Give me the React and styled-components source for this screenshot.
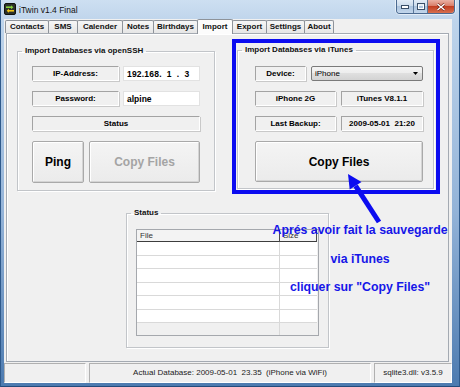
import React from "react";
import styled, { createGlobalStyle, css } from "styled-components";

const GlobalStyle = createGlobalStyle`
  html, body {
    margin: 0;
    padding: 0;
  }
  body {
    width: 460px;
    height: 387px;
    overflow: hidden;
    font-family: "Liberation Sans", Arial, sans-serif;
    font-size: 8px;
    color: #000;
  }
  * {
    box-sizing: border-box;
  }
`;

const Window = styled.div`
  position: relative;
  width: 460px;
  height: 387px;
  display: flex;
  flex-direction: column;
  padding-bottom: 3px;
  background: linear-gradient(180deg, #cddff1 0, #bed4eb 22px, #93b3d8 55%, #4d7bb0 100%);
  border-left: 1px solid #2f5a8c;
  border-right: 1px solid #2f5a8c;
  border-bottom: 1px solid #234b7c;
`;

const TitleBar = styled.div`
  height: 19px;
  flex: none;
  display: flex;
  align-items: flex-start;
  padding: 0 4px 0 3px;
`;

const AppIcon = styled.svg`
  margin-top: 3px;
  flex: none;
`;

const Title = styled.span`
  align-self: center;
  margin-left: 3px;
  font-size: 8.5px;
  color: #111;
`;

const CaptionGroup = styled.div`
  margin-left: auto;
  display: flex;
  height: 14px;
  border: 1px solid #4b6a91;
  border-top: none;
  border-radius: 0 0 4px 4px;
  overflow: hidden;
  box-shadow: 0 0 0 1px rgba(255, 255, 255, 0.55);
`;

const CaptionButton = styled.div`
  width: ${({ $w }) => $w}px;
  display: flex;
  align-items: center;
  justify-content: center;
  border-right: 1px solid #5b7799;
  background: linear-gradient(180deg, #e3ecf6 0, #c9d9ea 50%, #adc4de 50%, #c2d6ec 100%);
  &:last-child {
    border-right: none;
  }
  ${({ $close }) =>
    $close &&
    css`
      background: linear-gradient(180deg, #eab1a4 0, #d77862 50%, #c23e22 50%, #d8704f 100%);
    `}
`;

const Client = styled.div`
  flex: 1;
  margin: 0 7px 0 3px;
  display: flex;
  flex-direction: column;
  background: #f0f0f0;
`;

const TabStrip = styled.div`
  height: 14px;
  flex: none;
  display: flex;
  align-items: flex-end;
  padding-left: 1px;
  position: relative;
  z-index: 1;
`;

const Tab = styled.div`
  width: ${({ $w }) => $w}px;
  height: 13px;
  margin-right: -1px;
  border: 1px solid #8e939a;
  border-bottom: none;
  border-radius: 2px 2px 0 0;
  background: linear-gradient(180deg, #f6f6f6 0, #e6e6e6 100%);
  font-weight: bold;
  font-size: 8px;
  line-height: 12px;
  text-align: center;
  white-space: nowrap;
  color: #111;
  ${({ $active }) =>
    $active &&
    css`
      height: 15px;
      margin-bottom: -1px;
      line-height: 13px;
      background: #fcfcfc;
      position: relative;
      z-index: 2;
    `}
`;

const Panel = styled.div`
  flex: 1;
  margin: 0 3px 0 2px;
  border: 1px solid #a4aab2;
  box-shadow: inset 1px 1px 0 #fff;
  background: #f0f0f0;
  display: flex;
  flex-direction: column;
`;

const TopRow = styled.div`
  display: flex;
  align-items: flex-start;
  gap: 17px;
  margin-top: 5px;
  padding-left: 10px;
`;

const Group = styled.fieldset`
  margin: 0;
  padding: 0;
  min-width: 0;
  border: 1px solid #c2c5c9;
  box-shadow: inset 1px 1px 0 #fff, 1px 1px 0 #fff;
  width: ${({ $w }) => ($w ? `${$w}px` : "auto")};
`;

const Legend = styled.legend`
  margin-left: 4px;
  padding: 0 3px;
  font-size: 8px;
  font-weight: bold;
  line-height: 10px;
  color: #111;
`;

const SshGroup = styled(Group)`
  margin-top: 7px;
`;

const Highlight = styled.div`
  width: 208px;
  height: 155px;
  display: flex;
  border: 4px solid #0c0cf0;
  padding: 2px 2px 1px 1px;
`;

const ItunesGroup = styled(Group)`
  flex: 1;
`;

const FormGrid = styled.div`
  display: grid;
  grid-template-columns: 87px 77px;
  grid-template-rows: 15px 15px 15px 42px;
  column-gap: 4px;
  row-gap: 10px;
  padding: 10px 14px 7px;
`;

const FormStack = styled.div`
  display: flex;
  flex-direction: column;
  gap: 10px;
  padding: 11px 10px 0 17px;
`;

const Pair = styled.div`
  display: grid;
  grid-template-columns: ${({ $cols }) => $cols};
  column-gap: 5px;
  height: 15px;
`;

const Static = styled.div`
  display: flex;
  align-items: center;
  justify-content: center;
  border: 1px solid;
  border-color: #a3a3a3 #fff #fff #a3a3a3;
  box-shadow: 1px 1px 0 #c9c9c9;
  font-weight: bold;
  font-size: 8px;
  white-space: pre;
  ${({ $span }) =>
    $span &&
    css`
      grid-column: 1 / -1;
    `}
`;

const Field = styled.div`
  display: flex;
  align-items: center;
  padding-left: 3px;
  background: #fff;
  border: 1px solid #e2e2e2;
  font-weight: bold;
  font-size: 8.5px;
  white-space: pre;
  letter-spacing: ${({ $spaced }) => ($spaced ? "0.2px" : "0")};
`;

const Select = styled.div`
  display: flex;
  align-items: center;
  padding: 0 4px 0 3px;
  border: 1px solid #7a7a7a;
  border-radius: 2px;
  background: linear-gradient(180deg, #f4f4f4 0, #ececec 50%, #dfdfdf 50%, #d3d3d3 100%);
  font-size: 8px;
`;

const SelectArrow = styled.svg`
  margin-left: auto;
`;

const ButtonRow = styled.div`
  grid-column: 1 / -1;
  display: grid;
  grid-template-columns: 52px 1fr;
  column-gap: 5px;
`;

const Button = styled.button`
  font-family: inherit;
  font-weight: bold;
  font-size: 12px;
  height: ${({ $h }) => ($h ? `${$h}px` : "100%")};
  padding: 0;
  border: 1px solid #a9a9a9;
  border-radius: 2px;
  background: linear-gradient(180deg, #f4f4f4 0, #ebebeb 100%);
  box-shadow: inset 1px 1px 0 #fff, inset -1px -1px 0 #d4d4d4;
  color: #000;
  &:disabled {
    color: #a4a4a4;
  }
`;

const StatusGroup = styled(Group)`
  align-self: center;
  margin-top: 14px;
`;

const StatusBody = styled.div`
  padding: 11px 9px 11px;
`;

const ListView = styled.div`
  height: 107px;
  display: flex;
  flex-direction: column;
  border: 1px solid #a5a8ad;
  background: #f0f0f0;
`;

const ListLine = styled.div`
  display: grid;
  grid-template-columns: 143px 37px 1fr;
  flex: none;
`;

const HeadCell = styled.div`
  height: 12px;
  border-right: 1px solid #4d4d4d;
  border-bottom: 1px solid #3d3d3d;
  padding-left: 3px;
  font-size: 8px;
  line-height: 12px;
  color: #333;
  background: #f3f3f3;
`;

const Cell = styled.div`
  height: 13.5px;
  background: #fff;
  border-bottom: 1px solid #d9d9d9;
  border-right: ${({ $sep }) => ($sep ? "1px solid #d9d9d9" : "none")};
`;

const ListFill = styled(ListLine)`
  flex: 1;
`;

const FillCell = styled.div`
  border-right: ${({ $sep }) => ($sep ? "1px solid #d9d9d9" : "none")};
`;

const StatusBar = styled.div`
  height: 20px;
  flex: none;
  margin-top: 1px;
  display: flex;
  gap: 3px;
`;

const StatusPane = styled.div`
  width: ${({ $w }) => $w}px;
  border: 1px solid;
  border-color: #b0b0b0 #fff #fff #b0b0b0;
  font-size: 8px;
  line-height: 18px;
  text-align: center;
  white-space: pre;
  color: #222;
`;

const Note = styled.div`
  position: absolute;
  left: 258px;
  top: 216px;
  width: 202px;
  text-align: center;
  color: #1616e8;
  font-weight: bold;
  font-size: 12.3px;
  line-height: 28.5px;
  white-space: nowrap;
  pointer-events: none;
`;

const Arrow = styled.svg`
  position: absolute;
  left: 340px;
  top: 168px;
  pointer-events: none;
`;

const tabs = [
  { label: "Contacts", w: 44 },
  { label: "SMS", w: 30 },
  { label: "Calender", w: 46 },
  { label: "Notes", w: 32 },
  { label: "Birthdays", w: 45 },
  { label: "Import", w: 36, active: true },
  { label: "Export", w: 35 },
  { label: "Settings", w: 39 },
  { label: "About", w: 30 },
];

function TwinIcon() {
  return (
    <AppIcon width="12" height="12" viewBox="0 0 12 12">
      <rect x="0.5" y="0.5" width="11" height="11" rx="1.5" fill="#2c312b" stroke="#0f120e" />
      <path d="M2 4.2h6" stroke="#86d43c" strokeWidth="1.6" />
      <path d="M7 2.2l2.4 2-2.4 2z" fill="#86d43c" />
      <path d="M10 7.8H4" stroke="#f3c414" strokeWidth="1.6" />
      <path d="M5 5.8l-2.4 2 2.4 2z" fill="#f3c414" />
    </AppIcon>
  );
}

function Captions() {
  return (
    <CaptionGroup>
      <CaptionButton $w={17}>
        <svg width="8" height="4" viewBox="0 0 8 4">
          <rect x="0.5" y="0.5" width="7" height="3" fill="#fff" stroke="#3b4f68" />
        </svg>
      </CaptionButton>
      <CaptionButton $w={14}>
        <svg width="8" height="7" viewBox="0 0 8 7">
          <rect x="0.5" y="0.5" width="7" height="6" fill="none" stroke="#3b4f68" />
          <rect x="1.5" y="2" width="5" height="3.5" fill="none" stroke="#fff" />
        </svg>
      </CaptionButton>
      <CaptionButton $w={26} $close>
        <svg width="10" height="8" viewBox="0 0 10 8">
          <path d="M1.5 1l7 6M8.5 1l-7 6" stroke="#6b1d10" strokeWidth="2.6" />
          <path d="M1.5 1l7 6M8.5 1l-7 6" stroke="#fff" strokeWidth="1.5" />
        </svg>
      </CaptionButton>
    </CaptionGroup>
  );
}

export default function App() {
  return (
    <>
      <GlobalStyle />
      <Window>
        <TitleBar>
          <TwinIcon />
          <Title>iTwin v1.4 Final</Title>
          <Captions />
        </TitleBar>
        <Client>
          <TabStrip>
            {tabs.map((t) => (
              <Tab key={t.label} $w={t.w} $active={t.active}>
                {t.label}
              </Tab>
            ))}
          </TabStrip>
          <Panel>
            <TopRow>
              <SshGroup $w={198}>
                <Legend>Import Databases via openSSH</Legend>
                <FormGrid>
                  <Static>IP-Address:</Static>
                  <Field $spaced>{"192.168.  1  .  3"}</Field>
                  <Static>Password:</Static>
                  <Field>alpine</Field>
                  <Static $span>Status</Static>
                  <ButtonRow>
                    <Button>Ping</Button>
                    <Button disabled>Copy Files</Button>
                  </ButtonRow>
                </FormGrid>
              </SshGroup>
              <Highlight>
                <ItunesGroup>
                  <Legend>Import Databases via iTunes</Legend>
                  <FormStack>
                    <Pair $cols="51px 1fr">
                      <Static>Device:</Static>
                      <Select>
                        iPhone
                        <SelectArrow width="5" height="3" viewBox="0 0 5 3">
                          <path d="M0 0h5L2.5 3z" fill="#000" />
                        </SelectArrow>
                      </Select>
                    </Pair>
                    <Pair $cols="81px 1fr">
                      <Static>iPhone 2G</Static>
                      <Static>iTunes V8.1.1</Static>
                    </Pair>
                    <Pair $cols="81px 1fr">
                      <Static>Last Backup:</Static>
                      <Static>{"2009-05-01  21:20"}</Static>
                    </Pair>
                    <Button $h={41}>Copy Files</Button>
                  </FormStack>
                </ItunesGroup>
              </Highlight>
            </TopRow>
            <StatusGroup $w={203}>
              <Legend>Status</Legend>
              <StatusBody>
                <ListView>
                  <ListLine>
                    <HeadCell>File</HeadCell>
                    <HeadCell>Size</HeadCell>
                    <div />
                  </ListLine>
                  {[0, 1, 2, 3, 4, 5].map((i) => (
                    <ListLine key={i}>
                      <Cell $sep />
                      <Cell />
                      <div />
                    </ListLine>
                  ))}
                  <ListFill>
                    <FillCell $sep />
                    <FillCell />
                    <div />
                  </ListFill>
                </ListView>
              </StatusBody>
            </StatusGroup>
          </Panel>
          <StatusBar>
            <StatusPane $w={82} />
            <StatusPane $w={282}>
              {"Actual Database: 2009-05-01  23.35  (iPhone via WiFi)"}
            </StatusPane>
            <StatusPane $w={78}>sqlite3.dll: v3.5.9</StatusPane>
          </StatusBar>
        </Client>
        <Arrow width="45" height="60" viewBox="0 0 45 60">
          <path d="M38 54L14.6 17.8" stroke="#0c0cf0" strokeWidth="5" />
          <path d="M7 6L20.5 14L8.7 21.6z" fill="#0c0cf0" />
        </Arrow>
        <Note>
          <div>Aprés avoir fait la sauvegarde</div>
          <div>via iTunes</div>
          <div>cliquer sur "Copy Files"</div>
        </Note>
      </Window>
    </>
  );
}
